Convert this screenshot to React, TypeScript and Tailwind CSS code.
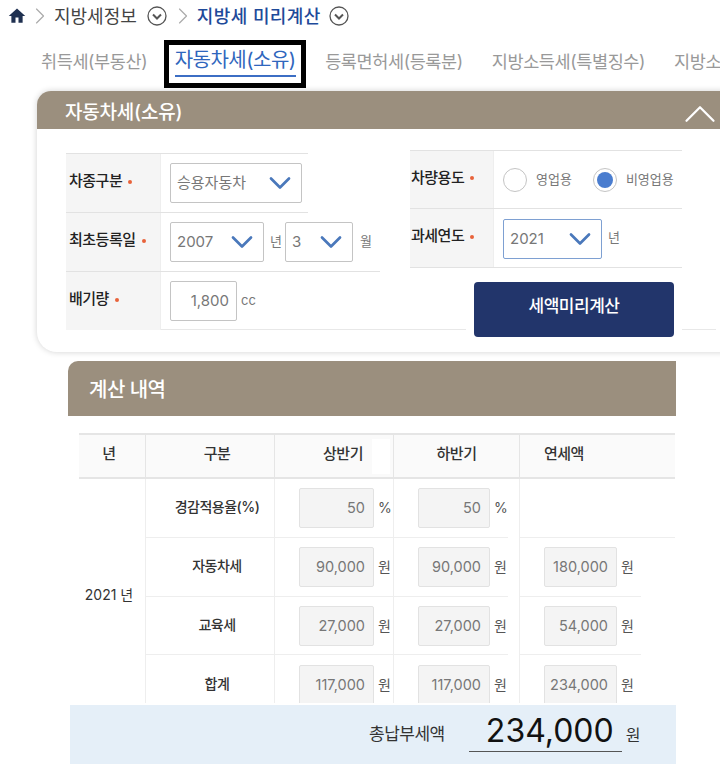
import { ChevronDown, ChevronRight, ChevronUp } from 'lucide-react';
import type { ReactNode } from 'react';

const font = { fontFamily: 'Inter, "Noto Sans CJK KR", "Noto Sans", sans-serif' };

function CircleChevron() {
  return (
    <svg width="20" height="20" viewBox="0 0 20 20" fill="none" stroke="#555" className="shrink-0">
      <circle cx="10" cy="10" r="9" strokeWidth="1.3" />
      <path d="M6 8.500l4 4 4-4" strokeWidth="2" />
    </svg>
  );
}

function Crumb() {
  return <ChevronRight size={28} color="#aaa" strokeWidth={1} className="shrink-0" />;
}

function Select({ value, className }: { value: string; className: string }) {
  return (
    <div className={`flex h-10 shrink-0 items-center justify-between rounded-[2px] border bg-white pl-[6px] pr-[3px] text-[15px] text-[#777] ${className}`}>
      <span>{value}</span>
      <ChevronDown size={36} color="#4a78bb" strokeWidth={1.8} />
    </div>
  );
}

function Label({ text, children, className, labelClass }: { text: string; children: ReactNode; className: string; labelClass: string }) {
  return (
    <div className={`flex border-b border-[#e2e2e2] ${className}`}>
      <div className={`flex shrink-0 items-center gap-[6px] border-r border-[#eeeeee] bg-[#f5f5f5] pb-[3px] text-[15px] font-medium tracking-[-0.5px] text-[#222] ${labelClass}`}>
        {text}
        <span className="h-1 w-1 rounded-full bg-[#e8623a]" />
      </div>
      <div className="flex items-center pl-[9px] text-[13px] text-[#777]">{children}</div>
    </div>
  );
}

function Radio({ checked, text }: { checked?: boolean; text: string }) {
  return (
    <div className="flex items-center gap-[9px]">
      <span className="flex h-6 w-6 items-center justify-center rounded-full border border-[#c4c4c4]">
        {checked && <span className="h-4 w-4 rounded-full bg-[#4a7dcf]" />}
      </span>
      <span>{text}</span>
    </div>
  );
}

function Cell({ children, line, className = '' }: { children?: ReactNode; line?: string; className?: string }) {
  return (
    <div className={`flex flex-col border-r border-[#eeeeee] ${className}`}>
      <div className="flex flex-1 items-center">{children}</div>
      {line && <div className={`h-px bg-[#eeeeee] ${line}`} />}
    </div>
  );
}

function Amount({ value, unit, width, left }: { value: string; unit: string; width: string; left: string }) {
  return (
    <div className={`flex items-center gap-[4px] ${left}`}>
      <div className={`flex h-10 items-center justify-end rounded-[2px] border border-[#e2e2e2] bg-[#f4f4f4] pr-[8px] text-[14.5px] text-[#777] ${width}`}>
        {value}
      </div>
      <span className="pb-px text-[14px] text-[#555]">{unit}</span>
    </div>
  );
}

const rows = [
  { name: '경감적용율(%)', first: '50', second: '50', total: '', unit: '%' },
  { name: '자동차세', first: '90,000', second: '90,000', total: '180,000', unit: '원' },
  { name: '교육세', first: '27,000', second: '27,000', total: '54,000', unit: '원' },
  { name: '합계', first: '117,000', second: '117,000', total: '234,000', unit: '원' },
];

const headerPad = ['pr-[6px]', 'pl-[14px]', 'relative pl-[18px]', '', ''];

export default function App() {
  return (
    <div className="h-[764px] w-[720px] overflow-hidden bg-white" style={font}>
      {/* breadcrumb */}
      <div className="flex h-[32px] items-center pl-[8px] text-[18px] text-[#444]">
        <svg width="18" height="18" viewBox="0 0 24 24" fill="#1f3050" className="shrink-0">
          <path d="M10 21v-7h4v7h5.500v-9H23L12 2 1 12h3.500v9z" />
        </svg>
        <Crumb />
        <span>지방세정보</span>
        <span className="ml-[10px]"><CircleChevron /></span>
        <span className="ml-[2px]"><Crumb /></span>
        <span className="font-medium tracking-[0.4px] text-[#1e4a9a]">지방세 미리계산</span>
        <span className="ml-[8px]"><CircleChevron /></span>
      </div>

      {/* tabs */}
      <div className="mt-[8px] flex h-[48px] items-center whitespace-nowrap pl-[41px] text-[17.5px] tracking-[-0.4px] text-[#999]">
        <span className="pb-[4px]">취득세(부동산)</span>
        <span className="mb-[4px] ml-[15px] h-4 w-px bg-[#999]" />
        <div className="ml-[2px] flex h-[48px] w-[142px] shrink-0 items-start justify-center border-[5px] border-black pt-[2px]">
          <span className="border-b-2 border-[#3c6ec4] pb-px text-[20px] leading-[27px] tracking-[-0.5px] text-[#2f66bd]">자동차세(소유)</span>
        </div>
        <span className="mb-[4px] ml-[5px] h-4 w-px bg-[#999]" />
        <span className="ml-[14px] pb-[4px]">등록면허세(등록분)</span>
        <span className="mb-[4px] ml-[15px] h-4 w-px bg-[#999]" />
        <span className="ml-[14px] pb-[4px]">지방소득세(특별징수)</span>
        <span className="mb-[4px] ml-[15px] h-4 w-px bg-[#999]" />
        <span className="ml-[14px] pb-[4px]">지방소득세</span>
      </div>

      {/* input panel */}
      <section className="ml-[37px] mt-[3px] h-[261px] w-[720px] rounded-bl-[20px] rounded-tl-[14px] bg-white shadow-[0_0_6px_rgba(0,0,0,0.18)]">
        <div className="flex h-[38px] items-center justify-between rounded-tl-[14px] bg-[#9b8f7e] pl-[28px] pr-[30px] text-[19px] font-medium tracking-[-0.2px] text-white">
          <span className="pt-[6px]">자동차세(소유)</span>
          <ChevronUp size={54} color="#fff" strokeWidth={1} className="mt-[8px]" />
        </div>
        <div className="ml-[29px] flex h-[201px] w-[650px] border-b border-[#e8e8e8]">
          <div className="w-[344px] shrink-0 pt-[24px]">
            <Label text="차종구분" className="h-[60px] w-[242px] border-t" labelClass="w-[95px] pl-[3px]">
              <Select value="승용자동차" className="w-[132px] border-[#c4c4c4]" />
            </Label>
            <Label text="최초등록일" className="h-[59px] w-[314px]" labelClass="w-[95px] pl-[3px]">
              <Select value="2007" className="w-[94px] border-[#c4c4c4]" />
              <span className="ml-[6px] mr-[3px]">년</span>
              <Select value="3" className="w-[68px] border-[#c4c4c4]" />
              <span className="ml-[7px]">월</span>
            </Label>
            <Label text="배기량" className="h-[58px] w-[179px] border-b-0" labelClass="w-[95px] pl-[3px]">
              <div className="flex h-10 w-[67px] items-center justify-end rounded-[2px] border border-[#c4c4c4] pr-[7px] text-[15px] text-[#777]">1,800</div>
              <span className="ml-1">cc</span>
            </Label>
          </div>
          <div className="w-[272px] shrink-0 pt-[21px]">
            <Label text="차량용도" className="h-[59px] border-t" labelClass="w-[84px] pl-[1px]">
              <div className="flex gap-[21px] whitespace-nowrap">
                <Radio text="영업용" />
                <Radio checked text="비영업용" />
              </div>
            </Label>
            <Label text="과세연도" className="h-[59px]" labelClass="w-[84px] pl-[1px]">
              <Select value="2021" className="mt-[2px] w-[99px] border-[#7ea0d2]" />
              <span className="ml-[6px]">년</span>
            </Label>
            <button className="ml-[64px] mt-[14px] flex h-[55px] w-[200px] items-center justify-center rounded-[4px] bg-[#22356b] pb-[5px] text-[17px] font-medium tracking-[-0.5px] text-white ring-8 ring-white">
              세액미리계산
            </button>
          </div>
        </div>
      </section>

      {/* result */}
      <section className="ml-[68px] mt-[9px] w-[608px]">
        <div className="flex h-[55px] items-center rounded-tl-[10px] bg-[#9b8f7e] pl-[21px] pt-[2px] text-[20px] font-medium tracking-[-0.5px] text-white">
          계산 내역
        </div>
        <div className="ml-[11px] mt-[17px] grid h-[270px] w-[596px] grid-cols-[67px_129px_119px_126px_155px] grid-rows-[44px_59px_59px_58px_59px] overflow-hidden border-t-2 border-[#e5e5e5] text-[#333]">
          {['년', '구분', '상반기', '하반기', '연세액'].map((title, i) => (
            <div
              key={title}
              className={`flex items-center border-b-2 border-r border-[#e5e5e5] bg-[#fafafa] pb-[3px] text-[15px] font-medium tracking-[-0.5px] ${
                i === 4 ? 'border-r-0 pl-[24px]' : 'justify-center'
              } ${headerPad[i]}`}
            >
              {title}
              {i === 2 && <span className="absolute left-[97px] top-[4px] h-[35px] w-[18px] bg-white" />}
            </div>
          ))}
          <div className="row-span-4 flex items-center justify-center border-r border-[#eeeeee] pb-[5px] pr-[6px] text-[14px]">2021 년</div>
          {rows.map((row, i) => (
            <div key={row.name} className="contents">
              <Cell line={i < 3 ? 'w-full' : undefined}>
                <div className="w-full pb-[3px] pl-[14px] text-center text-[14px] font-medium tracking-[-0.5px]">{row.name}</div>
              </Cell>
              <Cell line={i < 3 ? 'w-full' : undefined}>
                <Amount value={row.first} unit={row.unit} width="w-[75px]" left="ml-[24px]" />
              </Cell>
              <Cell line={i < 3 ? 'w-[114px]' : undefined}>
                <Amount value={row.second} unit={row.unit} width="w-[72px]" left="ml-[24px]" />
              </Cell>
              <Cell line={i === 3 ? undefined : i === 0 ? 'w-full' : 'w-[121px]'} className="border-r-0">
                {row.total && <Amount value={row.total} unit={row.unit} width="w-[73px]" left="ml-[24px]" />}
              </Cell>
            </div>
          ))}
        </div>
        <div className="ml-[2px] mt-[2px] flex h-[59px] w-[606px] items-center bg-[#e5eff8] text-[#333]">
          <span className="ml-[299px] text-[17px] tracking-[-0.5px]">총납부세액</span>
          <span className="mb-[7px] ml-[24px] w-[153px] border-b border-[#555] pr-2 text-right text-[32px] font-normal leading-[41px] text-[#111]">234,000</span>
          <span className="ml-[4px] text-[16px]">원</span>
        </div>
      </section>
    </div>
  );
}
